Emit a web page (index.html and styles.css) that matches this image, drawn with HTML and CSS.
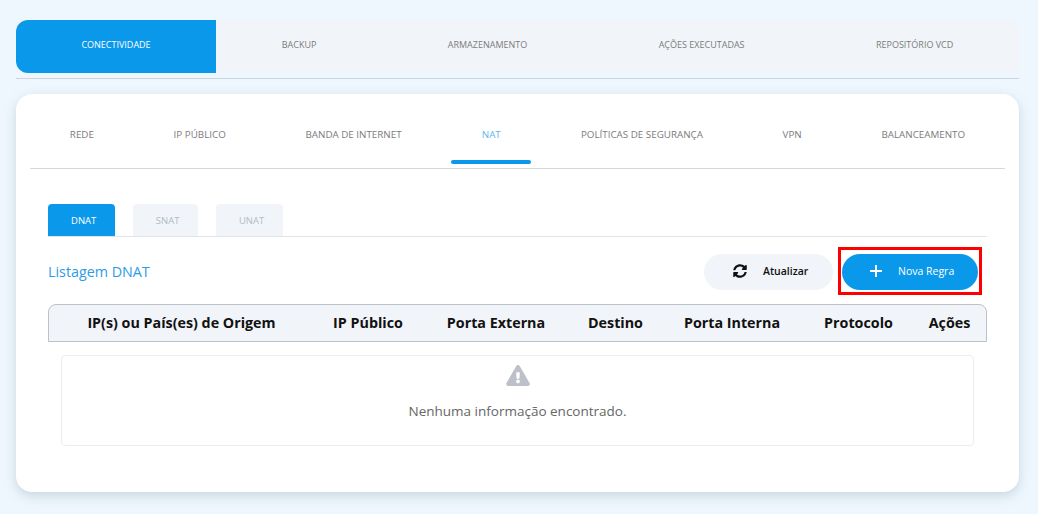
FILE: index.html
```html
<!DOCTYPE html>
<html lang="pt-BR">
<head>
    <meta charset="UTF-8">
    <meta name="viewport" content="width=device-width, initial-scale=1.0">
    <title>Conectividade - NAT</title>
    <link rel="stylesheet" href="styles.css">
</head>
<body>
    <nav class="main-tabs">
        <a class="main-tab active">CONECTIVIDADE</a>
        <a class="main-tab">BACKUP</a>
        <a class="main-tab">ARMAZENAMENTO</a>
        <a class="main-tab">AÇÕES EXECUTADAS</a>
        <a class="main-tab">REPOSITÓRIO VCD</a>
    </nav>

    <div class="card">
        <nav class="section-tabs">
            <a class="section-tab">REDE</a>
            <a class="section-tab">IP PÚBLICO</a>
            <a class="section-tab">BANDA DE INTERNET</a>
            <a class="section-tab active">NAT</a>
            <a class="section-tab">POLÍTICAS DE SEGURANÇA</a>
            <a class="section-tab">VPN</a>
            <a class="section-tab">BALANCEAMENTO</a>
        </nav>

        <div class="content">
            <div class="nat-tabs">
                <a class="nat-tab active">DNAT</a>
                <a class="nat-tab">SNAT</a>
                <a class="nat-tab">UNAT</a>
            </div>

            <div class="toolbar">
                <h2 class="list-title">Listagem DNAT</h2>
                <button type="button" class="btn btn-refresh">
                    <svg class="btn-icon" viewBox="0 0 512 512" aria-hidden="true"><path fill="currentColor" d="M370.72 133.28C339.458 104.008 298.888 87.962 255.848 88c-77.458.068-144.328 53.178-162.791 126.85-1.344 5.363-6.122 9.15-11.651 9.15H24.103c-7.498 0-13.194-6.807-11.807-14.176C33.933 94.924 134.813 8 256 8c66.448 0 126.791 26.136 171.315 68.685L463.03 40.97C478.149 25.851 504 36.559 504 57.941V192c0 13.255-10.745 24-24 24H345.941c-21.382 0-32.09-25.851-16.971-40.971l41.75-41.749zM32 296h134.059c21.382 0 32.09 25.851 16.971 40.971l-41.75 41.75c31.262 29.273 71.835 45.319 114.876 45.28 77.418-.07 144.315-53.144 162.787-126.849 1.344-5.363 6.122-9.15 11.651-9.15h57.304c7.498 0 13.194 6.807 11.807 14.176C478.067 417.076 377.187 504 256 504c-66.448 0-126.791-26.136-171.315-68.685L48.97 471.03C33.851 486.149 8 475.441 8 454.059V320c0-13.255 10.745-24 24-24z"/></svg>
                    Atualizar
                </button>
                <div class="highlight">
                    <button type="button" class="btn btn-new">
                        <svg class="btn-icon" viewBox="0 0 12 12" aria-hidden="true"><path fill="none" stroke="currentColor" stroke-width="2" d="M6 0v12M0 6h12"/></svg>
                        Nova Regra
                    </button>
                </div>
            </div>

            <div class="table-head">
                <span>IP(s) ou País(es) de Origem</span>
                <span>IP Público</span>
                <span>Porta Externa</span>
                <span>Destino</span>
                <span>Porta Interna</span>
                <span>Protocolo</span>
                <span>Ações</span>
            </div>

            <div class="empty-box">
                <svg class="empty-icon" viewBox="0 0 576 512" aria-hidden="true"><path fill="currentColor" d="M569.517 440.013C587.975 472.007 564.806 512 527.94 512H48.054c-36.937 0-59.999-40.055-41.577-71.987L246.423 23.985c18.467-32.009 64.72-31.951 83.154 0l239.94 416.028zM288 354c-25.405 0-46 20.595-46 46s20.595 46 46 46 46-20.595 46-46-20.595-46-46-46zm-43.673-165.346l7.418 136c.347 6.364 5.609 11.346 11.982 11.346h48.546c6.373 0 11.635-4.982 11.982-11.346l7.418-136c.375-6.874-5.098-12.654-11.982-12.654h-63.383c-6.884 0-12.356 5.78-11.981 12.654z"/></svg>
                <p>Nenhuma informação encontrado.</p>
            </div>
        </div>
    </div>
</body>
</html>
```

FILE: styles.css
```css
* {
    margin: 0;
    padding: 0;
    box-sizing: border-box;
    font-family: 'Open Sans', sans-serif;
}

body {
    min-height: 100vh;
    padding: 20px 19px 0 16px;
    background: #eef7fe;
}

.main-tabs {
    display: flex;
    height: 59px;
    padding-bottom: 5px;
    border-bottom: 1px solid #cbd5e0;
    background: linear-gradient(#f1f5f9, #f1f5f9) top / 100% 53px no-repeat;
}

.main-tab {
    flex: 1 1 auto;
    display: flex;
    align-items: center;
    justify-content: center;
    height: 53px;
    padding: 0 65px 5px;
    font-size: 9px;
    color: #7b7b7b;
}

.main-tab.active {
    flex: 0 0 200px;
    background: #0a98eb;
    border-radius: 12px 0 0 12px;
    color: #fff;
}

.card {
    margin-top: 15px;
    height: 398px;
    padding: 0 14px;
    background: #fff;
    border-radius: 16px;
    box-shadow: 0 4px 12px rgba(90, 120, 140, 0.25);
}

.section-tabs {
    display: flex;
    height: 75px;
    border-bottom: 1px solid #d5d8dc;
}

.section-tab {
    flex: 1 1 auto;
    display: flex;
    flex-direction: column;
    align-items: center;
    padding: 34px 39px 0;
    font-size: 9.8px;
    line-height: 14px;
    white-space: nowrap;
    color: #7b7b7b;
}

.section-tab.active {
    padding: 34px 9px 0;
    color: #5db8f0;
}

.section-tab.active::after {
    content: "";
    width: 80px;
    height: 4px;
    margin-top: 18px;
    border-radius: 2px;
    background: #0a98eb;
}

.content {
    padding: 35px 18px 0;
}

.nat-tabs {
    display: flex;
    gap: 18px;
    height: 33px;
    border-bottom: 1px solid #dfe2e6;
}

.nat-tab {
    display: flex;
    align-items: center;
    height: 32px;
    padding: 0 18.5px 0 23px;
    border-radius: 4px 4px 0 0;
    background: #f1f5f9;
    font-size: 9.5px;
    color: #b4bac2;
}

.nat-tab.active {
    background: #0a98eb;
    color: #fff;
}

.toolbar {
    display: flex;
    align-items: center;
    margin-top: 10px;
    padding-right: 5px;
}

.list-title {
    flex: 1;
    font-size: 14.3px;
    font-weight: 400;
    color: #2c9be6;
}

.btn {
    display: flex;
    align-items: center;
    height: 36px;
    padding-bottom: 2px;
    border: none;
    border-radius: 18px;
    font-size: 10.5px;
    font-weight: 600;
}

.btn-refresh {
    width: 129px;
    margin-top: 2px;
    padding-left: 29px;
    gap: 16px;
    background: #f1f5f9;
    color: #111;
}

.btn-new {
    width: 136px;
    padding-left: 28px;
    gap: 16px;
    background: #0a98eb;
    color: #fff;
    font-weight: 500;
}

.btn-icon {
    width: 14px;
    height: 14px;
}

.btn-new .btn-icon {
    width: 12px;
    height: 12px;
}

.highlight {
    margin-left: 5px;
    padding: 4px 1px 2px;
    border: 3px solid #f00;
}

.table-head {
    display: grid;
    grid-template-columns: 265px 108px 148px 91px 142px 111px 71px;
    align-items: center;
    width: 939px;
    height: 38px;
    margin-top: 9px;
    padding-bottom: 2px;
    border: 1px solid #bcc1c9;
    border-radius: 8px 8px 0 0;
    background: #f1f5f9;
    font-size: 14.3px;
    font-weight: 700;
    color: #111;
    text-align: center;
}

.empty-box {
    display: flex;
    flex-direction: column;
    align-items: center;
    width: 913px;
    height: 91px;
    margin: 13px 0 0 13px;
    padding-top: 9px;
    border: 1px solid #ebedf0;
    border-radius: 4px;
    font-size: 13.5px;
    color: #666;
}

.empty-icon {
    width: 24px;
    height: 21px;
    color: #bcc1c9;
}

.empty-box p {
    margin-top: 16px;
}
```
